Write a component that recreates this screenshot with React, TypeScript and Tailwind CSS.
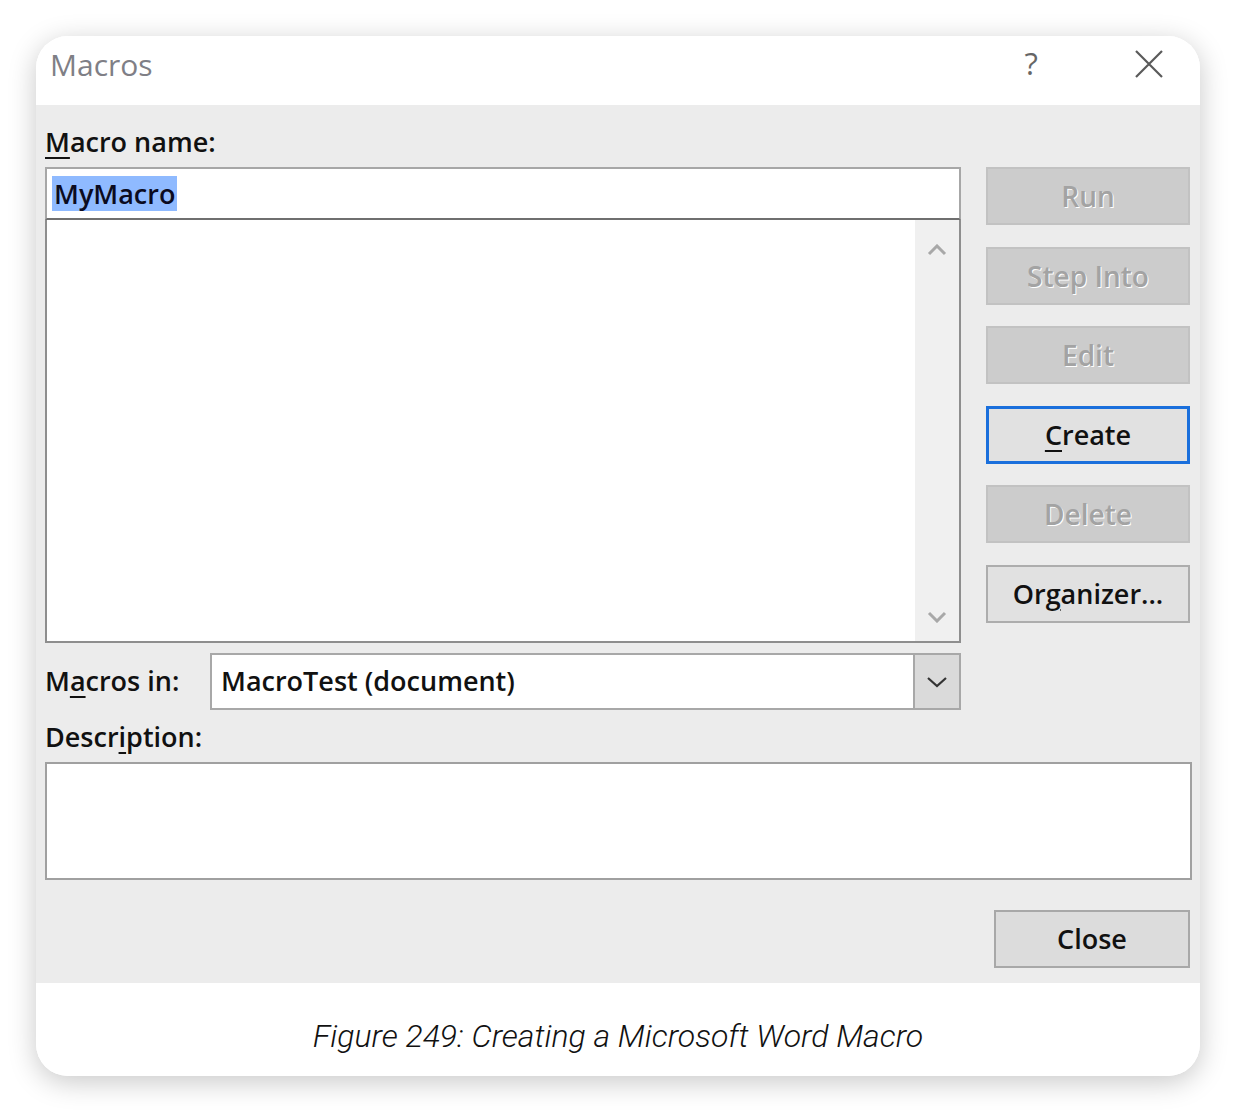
import React from "react";

const ui = { fontFamily: '"Open Sans", "Noto Sans", "DejaVu Sans", sans-serif' };

function Btn({ children, kind }: { children: React.ReactNode; kind: "disabled" | "default" | "normal" }) {
  if (kind === "disabled") {
    return (
      <div
        className="h-[58px] w-full flex items-center justify-center bg-[#cccccc] border-2 border-[#c2c2c2] text-[28px] text-[#a3a3a3] font-semibold"
        style={{ textShadow: "1px 1px 0 #ffffff" }}
      >
        {children}
      </div>
    );
  }
  if (kind === "default") {
    return (
      <div className="h-[58px] w-full flex items-center justify-center bg-[#e1e1e1] border-[3px] border-[#1a6fdc] text-[27px] text-[#111] font-semibold">
        {children}
      </div>
    );
  }
  return (
    <div className="h-[58px] w-full flex items-center justify-center bg-[#e1e1e1] border-2 border-[#adadad] text-[27px] text-[#111] font-semibold">
      {children}
    </div>
  );
}

export default function App() {
  return (
    <div className="w-[1236px] h-[1112px] bg-white p-[36px]" style={ui}>
      <div className="w-full h-full rounded-[32px] overflow-hidden flex flex-col bg-white shadow-[0_6px_28px_rgba(0,0,0,0.22)]">
        {/* title bar */}
        <div className="h-[69px] shrink-0 bg-white flex items-center pl-[14px] pr-[36px]">
          <span className="text-[30px] text-[#7f7f86] leading-none -mt-[12px]">Macros</span>
          <div className="flex-1" />
          <span className="text-[31px] text-[#666] leading-none -mt-[14px] mr-[96px]">?</span>
          <svg width="30" height="30" viewBox="0 0 30 30" className="-mt-[14px]">
            <path d="M2 2 L28 28 M28 2 L2 28" stroke="#5a5a5a" strokeWidth="2.2" fill="none" />
          </svg>
        </div>

        {/* body */}
        <div className="h-[878px] shrink-0 bg-[#ececec] pl-[9px] pr-[8px] flex flex-col text-[#111]">
          <div className="h-[62px] pt-[21px] text-[27px] leading-[32px] font-semibold">
            <span className="underline decoration-2 underline-offset-[5px]">M</span>acro name:
          </div>

          <div className="flex">
            {/* left column */}
            <div className="w-[916px] flex flex-col">
              <div className="h-[53px] bg-white border-2 border-[#a7a7a7] border-b-[#6f6f6f] flex items-center pl-[5px]">
                <span className="bg-[#8fbaff] text-[27px] leading-[35px] px-[2px] font-semibold text-[#0b0b20]">MyMacro</span>
              </div>
              <div className="h-[423px] bg-white border-2 border-t-0 border-[#8e8e8e] flex justify-end">
                <div className="w-[44px] h-full bg-[#f0f0f0] flex flex-col items-center justify-between pt-[24px] pb-[18px]">
                  <svg width="20" height="12" viewBox="0 0 20 12">
                    <path d="M2 10 L10 2 L18 10" stroke="#a8a8a8" strokeWidth="3" fill="none" />
                  </svg>
                  <svg width="20" height="12" viewBox="0 0 20 12">
                    <path d="M2 2 L10 10 L18 2" stroke="#a8a8a8" strokeWidth="3" fill="none" />
                  </svg>
                </div>
              </div>
              <div className="mt-[10px] h-[57px] flex items-center">
                <div className="w-[165px] text-[27px] font-semibold">
                  M<span className="underline decoration-2 underline-offset-[5px]">a</span>cros in:
                </div>
                <div className="flex-1 h-full bg-white border-2 border-[#a8a8a8] flex">
                  <div className="flex-1 flex items-center pl-[9px] text-[27px] font-semibold">MacroTest (document)</div>
                  <div className="w-[46px] h-full bg-[#dadada] border-l-2 border-[#a8a8a8] flex items-center justify-center">
                    <svg width="22" height="12" viewBox="0 0 22 12">
                      <path d="M2 2 L11 10 L20 2" stroke="#333" strokeWidth="2.2" fill="none" />
                    </svg>
                  </div>
                </div>
              </div>
            </div>

            {/* right column */}
            <div className="ml-[25px] w-[204px] flex flex-col gap-[21.6px]">
              <Btn kind="disabled">Run</Btn>
              <Btn kind="disabled">Step Into</Btn>
              <Btn kind="disabled">Edit</Btn>
              <Btn kind="default">
                <span className="underline decoration-2 underline-offset-[5px]">C</span>reate
              </Btn>
              <Btn kind="disabled">Delete</Btn>
              <Btn kind="normal">
                Or<span className="underline decoration-2 underline-offset-[5px]">g</span>anizer...
              </Btn>
            </div>
          </div>

          <div className="h-[52px] pt-[11px] text-[27px] leading-[32px] font-semibold">
            Descr<span className="underline decoration-2 underline-offset-[5px]">i</span>ption:
          </div>
          <div className="h-[118px] bg-white border-2 border-[#a0a0a0]" />

          <div className="mt-[30px] flex justify-end pr-[2px]">
            <div className="w-[196px] h-[58px] bg-[#dcdcdc] border-2 border-[#a8a8a8] flex items-center justify-center text-[27px] font-semibold">
              Close
            </div>
          </div>
        </div>

        {/* caption */}
        <div className="flex-1 bg-white flex items-center justify-center pt-[12px]">
          <span
            className="italic font-light text-[32px] text-[#111]"
            style={{ fontFamily: 'Roboto, "Liberation Sans", sans-serif' }}
          >
            Figure 249: Creating a Microsoft Word Macro
          </span>
        </div>
      </div>
    </div>
  );
}
